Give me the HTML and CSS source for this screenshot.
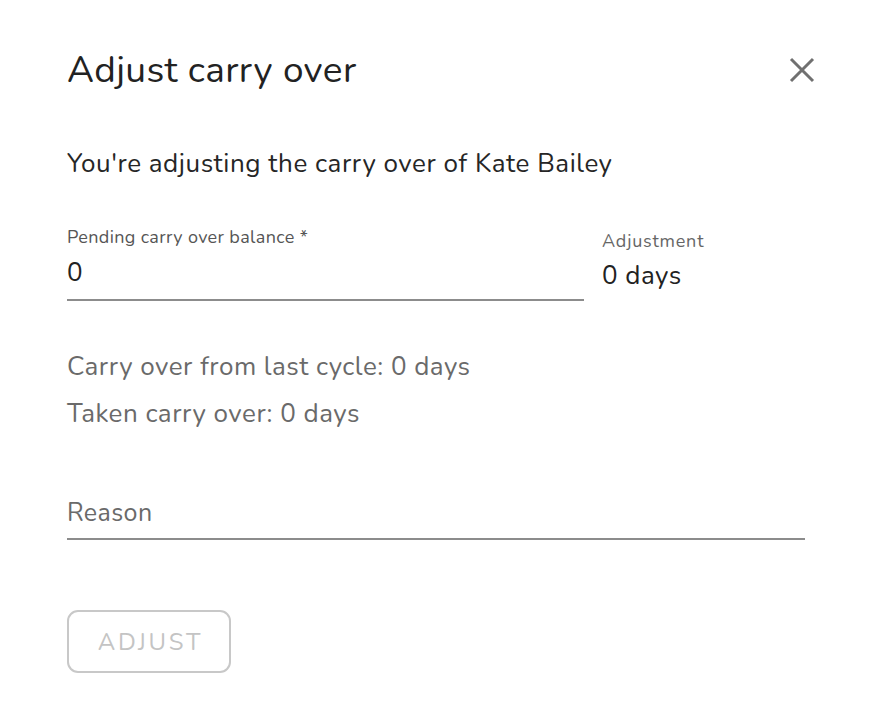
FILE: index.html
```html
<!DOCTYPE html>
<html lang="en">
<head>
<meta charset="utf-8">
<title>Adjust carry over</title>
<link rel="stylesheet" href="styles.css">
</head>
<body>
<div class="dialog">
  <header class="dialog-header">
    <h1 class="dialog-title">Adjust carry over</h1>
    <button class="close-btn" aria-label="Close">
      <svg width="26" height="26" viewBox="0 0 26 26"><path d="M2 2 L24 24 M24 2 L2 24" stroke="#707070" stroke-width="3" fill="none"/></svg>
    </button>
  </header>
  <p class="intro">You're adjusting the carry over of Kate Bailey</p>
  <div class="field-row">
    <div class="field">
      <label class="field-label">Pending carry over balance *</label>
      <div class="field-input">0</div>
    </div>
    <div class="adjustment">
      <div class="adj-label">Adjustment</div>
      <div class="adj-value">0 days</div>
    </div>
  </div>
  <div class="info">
    <p class="info-line">Carry over from last cycle: 0 days</p>
    <p class="info-line">Taken carry over: 0 days</p>
  </div>
  <div class="reason">Reason</div>
  <button class="adjust-btn" disabled>ADJUST</button>
</div>
</body>
</html>
```

FILE: styles.css
```css
* { box-sizing: border-box; }
html, body { margin: 0; padding: 0; background: #fff; }
body { font-family: "Nunito", "Open Sans", "Liberation Sans", sans-serif; color: #222; }
.dialog { padding: 44px 70px 0 67px; width: 886px; }
.dialog-header { display: flex; justify-content: space-between; align-items: center; height: 52px; }
.dialog-title { margin: 0; font-size: 37px; line-height: 52px; font-weight: 400; color: #222; letter-spacing: 0.4px; }
.close-btn { background: none; border: 0; padding: 0; width: 26px; height: 26px; margin-right: 1px; }
.close-btn svg { display: block; }
.intro { margin: 53px 0 0; font-size: 26px; line-height: 30px; color: #262626; letter-spacing: 0.55px; }
.field-row { display: flex; gap: 18px; margin-top: 48px; }
.field { width: 517px; border-bottom: 2px solid #8c8c8c; }
.field-label { display: block; font-size: 18px; line-height: 20px; color: #555; letter-spacing: 0.35px; }
.field-input { font-size: 26px; line-height: 30px; padding: 11px 0 11px; color: #222; }
.adjustment { padding-top: 4px; }
.adj-label { font-size: 18px; line-height: 20px; color: #666; letter-spacing: 0.8px; }
.adj-value { font-size: 26px; line-height: 30px; padding-top: 10px; color: #222; letter-spacing: 0.5px; }
.info { margin-top: 51px; }
.info-line { margin: 0 0 17px; font-size: 26px; line-height: 30px; color: #6a6a6a; letter-spacing: 0.5px; }
.info-line:last-child { margin-bottom: 0; }
.reason { margin-top: 69px; width: 738px; border-bottom: 2px solid #8c8c8c; font-size: 25px; line-height: 30px; padding-bottom: 10px; color: #6a6a6a; letter-spacing: 0.4px; }
.adjust-btn { display: block; margin-top: 70px; width: 164px; height: 63px; border: 2.5px solid #c8c8c8; border-radius: 11px; background: #fff; font-family: inherit; font-size: 24px; letter-spacing: 2.8px; color: #c4c4c4; padding: 0 0 0 3px; }
```
